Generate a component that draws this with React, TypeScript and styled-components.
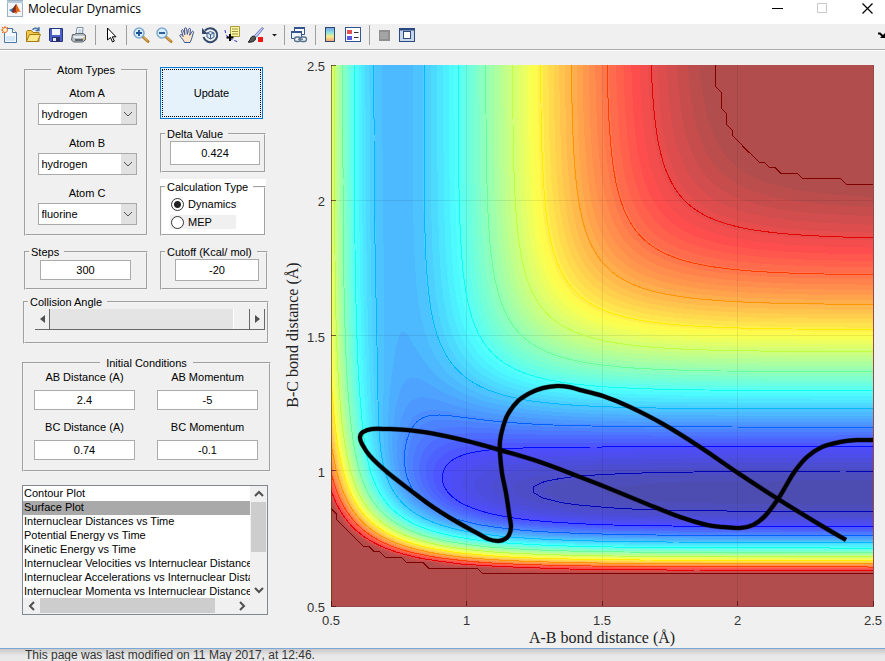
import React from "react";
import styled, { createGlobalStyle } from "styled-components";

/* ---------- potential energy surface ---------- */

type Pair = { depth: number; beta: number; r0: number };

const HH: Pair = { depth: 109.449, beta: 1.942, r0: 0.7419 };
const HF: Pair = { depth: 141.196, beta: 2.2187, r0: 0.917 };
const SATO = 0.186;
const CUTOFF = -22.4;
const V_MIN = -141.5;

const STEP = 0.02;
const N = 101;

function coulombExchange(p: Pair, r: number): [number, number] {
  const u = Math.exp(-p.beta * (r - p.r0));
  const singlet = p.depth * (u * u - 2 * u);
  const triplet = ((p.depth / 2) * (1 - SATO) * (u * u + 2 * u)) / (1 + SATO);
  return [(singlet + triplet) / 2, (singlet - triplet) / 2];
}

function leps(ab: number, bc: number): number {
  const [q1, j1] = coulombExchange(HH, ab);
  const [q2, j2] = coulombExchange(HF, bc);
  const [q3, j3] = coulombExchange(HF, ab + bc);
  const mix = (j1 - j2) ** 2 + (j2 - j3) ** 2 + (j3 - j1) ** 2;
  return q1 + q2 + q3 - Math.sqrt(mix / 2);
}

const grid: number[][] = Array.from({ length: N }, (_, j) =>
  Array.from({ length: N }, (_, i) => Math.min(CUTOFF, leps(0.5 + i * STEP, 0.5 + j * STEP)))
);

/* plot frame in drawing units */
const LEFT = 331;
const RIGHT = 873;
const TOP = 65;
const BOTTOM = 606;
const px = (i: number) => LEFT + ((RIGHT - LEFT) * i) / (N - 1);
const py = (j: number) => BOTTOM - ((BOTTOM - TOP) * j) / (N - 1);

/* Marching squares. With `closed` the grid is ringed by low values so every line becomes a loop. */
function contour(level: number, closed: boolean): string {
  const lo = closed ? -1 : 0;
  const hi = closed ? N : N - 1;
  const value = (i: number, j: number) =>
    i < 0 || j < 0 || i >= N || j >= N ? -1e9 : grid[j][i];
  const next = new Map<string, string>();
  const ends = new Set<string>();
  const points = new Map<string, string>();

  const cross = (a: number[], b: number[]): string => {
    const [p, q] = a[0] < b[0] || a[1] < b[1] ? [a, b] : [b, a];
    const key = `${p[0]},${p[1]},${q[0]},${q[1]}`;
    if (!points.has(key)) {
      const vp = value(p[0], p[1]);
      const vq = value(q[0], q[1]);
      const t = (level - vp) / (vq - vp);
      const x = px(p[0] + (q[0] - p[0]) * t);
      const y = py(p[1] + (q[1] - p[1]) * t);
      points.set(key, `${x.toFixed(1)} ${y.toFixed(1)}`);
    }
    return key;
  };

  for (let j = lo; j < hi; j++) {
    for (let i = lo; i < hi; i++) {
      const c = [[i, j], [i + 1, j], [i + 1, j + 1], [i, j + 1]];
      const inside = c.map(([a, b]) => value(a, b) >= level);
      for (let e = 0; e < 4; e++) {
        if (!inside[e] || inside[(e + 1) % 4]) continue;
        let f = (e + 1) % 4;
        while (!(!inside[f] && inside[(f + 1) % 4])) f = (f + 1) % 4;
        const from = cross(c[e], c[(e + 1) % 4]);
        const to = cross(c[f], c[(f + 1) % 4]);
        next.set(from, to);
        ends.add(to);
      }
    }
  }

  const seen = new Set<string>();
  const starts = [...next.keys()];
  const ordered = [...starts.filter((k) => !ends.has(k)), ...starts.filter((k) => ends.has(k))];
  let d = "";
  for (const start of ordered) {
    if (seen.has(start)) continue;
    let key: string | undefined = start;
    d += "M" + points.get(start);
    while (key !== undefined && !seen.has(key)) {
      seen.add(key);
      key = next.get(key);
      if (key !== undefined) d += "L" + points.get(key);
    }
  }
  return d;
}

/* rainbow map, optionally washed towards white */
function jet(level: number, alpha: number): string {
  const t = Math.min(1, Math.max(0, (level - V_MIN) / (CUTOFF - V_MIN)));
  const v = 0.0625 + t * 3.875;
  const clamp = (n: number) => Math.min(1, Math.max(0, n));
  const rgb = [
    clamp(Math.min(v - 1.5, 4.5 - v)),
    clamp(Math.min(v - 0.5, 3.5 - v)),
    clamp(Math.min(v + 0.5, 2.5 - v)),
  ];
  return `rgb(${rgb.map((n) => Math.round(255 * (n * alpha + 1 - alpha))).join(",")})`;
}

const BAND_COUNT = 64;
const bands = Array.from({ length: BAND_COUNT - 1 }, (_, k) => {
  const width = (CUTOFF - V_MIN) / BAND_COUNT;
  const level = V_MIN + width * (k + 1);
  return { d: contour(level, true), fill: jet(V_MIN + (width * (k + 1) * BAND_COUNT) / (BAND_COUNT - 1), 0.7) };
});

const lines = Array.from({ length: 12 }, (_, k) => {
  const level = k === 11 ? CUTOFF - 0.0001 : -137.2 + 10.43 * k;
  return { d: contour(level, false), stroke: k === 11 ? "rgb(128,0,0)" : jet(level, 1) };
});

const track: number[][] = [
  [846, 540], [822, 526], [778, 499], [738, 473], [700, 447], [663, 424], [630, 407], [603, 396],
  [580, 390], [569, 387], [557, 386], [543, 388], [530, 393], [518, 401], [508, 414], [503, 427],
  [500, 441], [500, 453], [502, 473], [506, 493], [509, 513], [511, 527], [509, 535], [505, 539],
  [498, 541], [488, 539], [477, 533], [457, 522], [433, 507], [410, 490], [387, 472], [370, 456],
  [362, 444], [360, 437], [363, 432], [372, 429], [386, 429], [407, 430], [430, 433], [463, 440],
  [500, 450], [540, 462], [580, 477], [613, 490], [647, 504], [680, 517], [707, 525], [723, 527],
  [740, 528], [753, 525], [765, 516], [778, 499], [787, 484], [795, 471], [807, 457], [822, 447],
  [840, 442], [857, 440], [873, 440],
];

function smooth(pts: number[][]): string {
  let d = `M${pts[0].join(" ")}`;
  for (let i = 0; i < pts.length - 1; i++) {
    const [a, b, c, e] = [pts[Math.max(0, i - 1)], pts[i], pts[i + 1], pts[Math.min(pts.length - 1, i + 2)]];
    const h = (p: number, q: number, r: number) => (p + (r - q) / 6).toFixed(1);
    d += `C${h(b[0], a[0], c[0])} ${h(b[1], a[1], c[1])} ${h(c[0], e[0], b[0])} ${h(c[1], e[1], b[1])} ${c.join(" ")}`;
  }
  return d;
}

const trackPath = smooth(track);

/* ---------- styles ---------- */

const GlobalStyle = createGlobalStyle`
  body { margin: 0; background: #e9e9e9; }
  *, *::before, *::after { box-sizing: border-box; }
`;

const Page = styled.div`
  min-height: 100vh;
  display: flex;
  flex-direction: column;
  font-family: "Liberation Sans", Arial, sans-serif;
  font-size: 11px;
  line-height: 14px;
  color: #000;
`;

const Window = styled.main`
  flex: none;
  background: #f0f0f0;
  border-bottom: 1px solid #7ba7d7;
`;

const TitleBar = styled.header`
  display: flex;
  align-items: flex-start;
  height: 24px;
  background: #fff;
  padding-left: 7px;
`;

const Title = styled.h1`
  flex: 1;
  margin: 0;
  padding-left: 5px;
  font: 400 12px/18px "Open Sans", "Noto Sans", sans-serif;
`;

const CaptionButton = styled.button`
  width: 45px;
  height: 17px;
  padding: 0 0 0 9px;
  border: 0;
  background: none;
  display: grid;
  place-items: center;
`;

const Toolbar = styled.div`
  display: flex;
  align-items: center;
  height: 27px;
  border-bottom: 2px groove #fff;
  padding-bottom: 3px;
`;

const Tool = styled.button<{ $width?: number }>`
  flex: none;
  width: ${(p) => p.$width ?? 23}px;
  height: 22px;
  padding: 0 0 0 1px;
  border: 0;
  background: none;
  display: flex;
  align-items: center;
`;

const Divider = styled.span`
  flex: none;
  width: 1px;
  height: 20px;
  margin: 0 4px 0 3px;
  background: #a0a0a0;
`;

const Spacer = styled.span`
  flex: 1;
`;

const Figure = styled.div`
  display: flex;
  align-items: flex-start;
`;

const Controls = styled.form`
  flex: none;
  width: 280px;
  padding: 12px 9px 0 22px;
  display: flex;
  flex-direction: column;
`;

const TwoColumns = styled.div<{ $after: number }>`
  display: grid;
  grid-template-columns: 124px 108px;
  column-gap: 12px;
  margin: 0 3px ${(p) => p.$after}px 2px;
`;

const Stack = styled.div`
  display: flex;
  flex-direction: column;
  align-items: flex-start;
  padding-top: 4px;
`;

const Group = styled.fieldset<{ $center?: boolean }>`
  min-width: 0;
  width: 100%;
  margin: 0;
  border: 2px groove #f4f4f4;
  padding: 0;
  & > legend {
    padding: 0 ${(p) => (p.$center ? 6 : 5)}px 0 ${(p) => (p.$center ? 6 : 2)}px;
    margin-left: ${(p) => (p.$center ? "auto" : "3px")};
    margin-right: ${(p) => (p.$center ? "auto" : "0")};
    white-space: nowrap;
  }
`;

const Body = styled.div<{ $pad: string }>`
  padding: ${(p) => p.$pad};
`;

const DeltaSlot = styled.div`
  width: 106px;
  margin: 8px 0 6px;
`;

const WhiteSlot = styled.div`
  width: 106px;
  padding-top: 1px;
  background: #fff;
`;

const Update = styled.button`
  width: 103px;
  height: 52px;
  border: 1px solid #0078d7;
  outline: 1px dotted #000;
  outline-offset: -3px;
  background: #e5f1fb;
  font: inherit;
`;

const Labelled = styled.label<{ $gap?: number }>`
  display: grid;
  row-gap: ${(p) => p.$gap ?? 3}px;
  justify-items: center;
  text-align: center;
`;

const Atoms = styled.div`
  display: grid;
  row-gap: 11px;
  justify-content: center;
`;

const DropFrame = styled.span`
  display: grid;
  width: 99px;
  height: 22px;
  & > * {
    grid-area: 1 / 1;
  }
`;

const Drop = styled.select`
  appearance: none;
  width: 100%;
  border: 1px solid #a9a9a9;
  border-radius: 0;
  background: #fff;
  padding: 0 3px;
  font: inherit;
  color: #000;
`;

const DropArrow = styled.span`
  justify-self: end;
  width: 15px;
  margin: 1px;
  background: #e1e1e1;
  display: grid;
  place-items: center;
  pointer-events: none;
`;

const Value = styled.input<{ $width?: number; $height?: number }>`
  display: block;
  width: ${(p) => (p.$width ? `${p.$width}px` : "100%")};
  height: ${(p) => p.$height ?? 20}px;
  border: 1px solid #ababab;
  padding: 0;
  background: #fff;
  font: inherit;
  color: #000;
  text-align: center;
`;

const Choice = styled.label<{ $shaded?: boolean }>`
  display: flex;
  align-items: center;
  gap: 4px;
  width: 66px;
  height: 14px;
  margin-bottom: 4px;
  background: ${(p) => (p.$shaded ? "#f0f0f0" : "#fff")};
`;

const Radio = styled.input`
  appearance: none;
  flex: none;
  width: 13px;
  height: 13px;
  margin: 0 0 0 1px;
  border: 1px solid #333;
  border-radius: 50%;
  background: #fff;
  &:checked {
    background: radial-gradient(circle, #222 0 3px, #fff 4px);
  }
`;

const Wide = styled.div`
  margin: 0 2px 12px 1px;
`;

const Slider = styled.div`
  display: flex;
  width: 230px;
  height: 21px;
  border-bottom: 1px solid #696969;
`;

const SliderEnd = styled.button`
  flex: none;
  width: 15px;
  padding: 0;
  border: 0;
  border-right: 1px solid #696969;
  background: #f0f0f0;
  display: grid;
  place-items: center;
`;

const Range = styled.input`
  appearance: none;
  flex: 1;
  min-width: 0;
  height: 20px;
  margin: 0;
  background: #e4e4e4;
  &::-webkit-slider-thumb {
    appearance: none;
    width: 17px;
    height: 20px;
    background: #f0f0f0;
    border-left: 1px solid #fff;
    border-right: 1px solid #696969;
  }
`;

const Conditions = styled.div`
  display: grid;
  grid-template-columns: 101px 101px;
  column-gap: 22px;
  row-gap: 10px;
`;

const ListBox = styled.div`
  display: grid;
  grid-template-columns: minmax(0, 1fr) 17px;
  grid-template-rows: 112px 16px;
  width: 246px;
  margin-top: 13px;
  border: 1px solid #828790;
  background: #fff;
`;

const List = styled.select`
  overflow: hidden;
  scrollbar-width: none;
  border: 0;
  outline: 0;
  padding: 1px 0 0;
  background: #fff;
  font: inherit;
  color: #000;
`;

const Item = styled.option`
  height: 14px;
  min-height: 14px;
  padding: 0 1px;
  line-height: 14px;
  color: #000;
  &:checked {
    color: #000;
    background: #a9a9a9 linear-gradient(#a9a9a9, #a9a9a9);
  }
`;

const ScrollBar = styled.div<{ $across?: boolean }>`
  display: flex;
  flex-direction: ${(p) => (p.$across ? "row" : "column")};
  background: #f0f0f0;
`;

const ScrollEnd = styled.button`
  flex: none;
  width: 17px;
  height: 16px;
  padding: 0;
  border: 0;
  background: none;
  display: grid;
  place-items: center;
`;

const Thumb = styled.span<{ $across?: boolean }>`
  flex: none;
  width: ${(p) => (p.$across ? "175px" : "15px")};
  height: ${(p) => (p.$across ? "15px" : "50px")};
  margin: ${(p) => (p.$across ? "0 auto 0 0" : "0 1px auto")};
  background: #cdcdcd;
`;

const Corner = styled.span`
  background: #f0f0f0;
`;

const Plot = styled.svg`
  flex: 1;
  min-width: 0;
  display: block;
`;

const Footer = styled.footer`
  padding: 0 25px;
  font-size: 12px;
  line-height: 12px;
  color: #333;
  background: linear-gradient(#c9c9c9, #e9e9e9 7px);
  white-space: nowrap;
`;

/* ---------- icons ---------- */

function Icon({ children, size = 18 }: { children: React.ReactNode; size?: number }) {
  return (
    <svg width={size} height="18" viewBox={`0 0 ${size} 18`} fill="none" aria-hidden="true">
      {children}
    </svg>
  );
}

const Logo = () => (
  <svg width="16" height="17" viewBox="0 0 16 17" aria-hidden="true">
    <rect x="0.5" y="0.5" width="15" height="16" fill="#f2f6fa" stroke="#9fb2c4" />
    <path d="M0 1h16v2H0z" fill="#b7c9da" />
    <path d="M2 10l4-2 3 3-3 2z" fill="#3c7fb5" />
    <path d="M6 8l3-4 1 1-1 6-2 2-2-1z" fill="#7a2a1c" />
    <path d="M9 4c2 2 3 6 5 8-2-1-3-1-5 2l-2-2c2-1 2-5 2-8z" fill="#e2661a" />
    <path d="M9 5v7l-2 0z" fill="#a83214" />
  </svg>
);

const NewIcon = () => (
  <Icon>
    <path d="M3.500 2.500h8l4 4v10h-12z" fill="#f4faff" stroke="#4a77a8" />
    <path d="M5 10h9v5H5z" fill="#d3e7f7" />
    <path d="M11.500 2.500v4h4" fill="#fff" stroke="#4a77a8" />
    <circle cx="4" cy="4" r="2.500" fill="#fff4d0" stroke="#e2722c" />
    <path d="M4 0v2M0 4h2M1 1l1 1M7 1L6 2M1 7l1-1" stroke="#e2722c" />
  </Icon>
);

const OpenIcon = () => (
  <Icon>
    <path d="M2.500 15.500v-10l1-1h4l1.500 2h6v9z" fill="#f3c64c" stroke="#a77b14" />
    <path d="M2.500 15.500l3-7h11l-3 7z" fill="#fde98b" stroke="#a77b14" />
    <path d="M8.500 4c1-2 4-2.500 6-.5M15 1v3.500h-3.500" stroke="#3b6ea5" strokeWidth="1.300" />
  </Icon>
);

const SaveIcon = () => (
  <Icon>
    <path d="M2.500 2.500h13v13h-12l-1-1z" fill="#4a5fc8" stroke="#27347f" />
    <rect x="5" y="3" width="8" height="6" fill="#f3f6ff" />
    <rect x="5" y="11" width="8" height="5" fill="#27306b" />
    <rect x="6" y="12" width="3" height="3" fill="#e7eaf6" />
  </Icon>
);

const PrintIcon = () => (
  <Icon>
    <path d="M6 8L7 1.500h6L12.500 8" fill="#fff" stroke="#7d8fa3" />
    <path d="M8 4h3.500M8 6h3.500" stroke="#8cb0d8" />
    <path d="M2.500 8.500h2l1.500-1h7l2.500 1.500v5l-3 2h-9l-2-2z" fill="#b6bcc4" stroke="#5d646d" />
    <path d="M3 10h12l-2 2H4z" fill="#e9ecef" />
    <path d="M5 14h8" stroke="#454b52" strokeWidth="1.500" />
    <circle cx="14" cy="12.500" r="1" fill="#e0c84a" />
  </Icon>
);

const PointerIcon = () => (
  <Icon>
    <path d="M6.500 2v12l3-2.500 2 4.500 1.800-.9-2-4.300h3.700z" fill="#fff" stroke="#000" />
  </Icon>
);

const ZoomIcon = ({ plus }: { plus?: boolean }) => (
  <Icon>
    <path d="M11 11l5 4.500" stroke="#b6802a" strokeWidth="3" strokeLinecap="round" />
    <path d="M11.500 11l4 3.800" stroke="#f0c778" />
    <circle cx="7" cy="7" r="5" fill="#d6eefc" stroke="#7fa9cf" strokeWidth="1.500" />
    <path d={plus ? "M4 7h6M7 4v6" : "M4 7h6"} stroke="#1e4f94" strokeWidth="1.800" />
  </Icon>
);

const HandIcon = () => (
  <Icon>
    <path
      d="M6.500 16.500c-1-2.500-3-4.500-4.500-6.500-.8-1.300 1-2 2-.8l1.200 1.300L3.500 5c-.3-1.500 1.500-1.800 2-.3l1.300 4L6.500 3c0-1.600 2-1.600 2.200 0l.6 5.300 1.200-5c.4-1.500 2.200-1 2 .5l-.8 5.500 2-3.500c.8-1.300 2.300-.5 1.700 1-1 2.700-1.400 6-3.400 9.700z"
      fill="#fce6c9"
      stroke="#37559b"
    />
  </Icon>
);

const RotateIcon = () => (
  <Icon>
    <path d="M4 4.500A7 7 0 1 1 2.500 11" stroke="#33486b" strokeWidth="2" />
    <path d="M1 2v6h6z" fill="#33486b" />
    <path d="M6 7l3.500-1.500L13 7v4l-3.500 2L6 11zM6 7l3.500 1.500L13 7M9.500 8.500V13" fill="#dbe8f5" stroke="#41608c" />
  </Icon>
);

const DataTipIcon = () => (
  <Icon>
    <path d="M6.500.5h9v10h-9z" fill="#fbf6a4" stroke="#a79b3e" />
    <path d="M8 3h6M8 5.500h6M8 8h6" stroke="#9b9140" />
    <path d="M1 4c.5 4 2 7 5 8.500s6 3 9 3.500" stroke="#3333c8" strokeDasharray="3 2" />
    <path d="M6 8v7M2.500 11.500h7" stroke="#000" strokeWidth="2" />
  </Icon>
);

const BrushIcon = () => (
  <Icon>
    <path d="M7.500 9.500L15 1.500l1.500 1L9.500 11z" fill="#c3cdfa" stroke="#6d79b8" />
    <path d="M1 16c2-.5 2-4 4-5.500 1.500-1 4 0 3.500 2.500C8 15.500 4 16.800 1 16z" fill="#555" stroke="#222" />
    <rect x="11" y="11" width="5" height="5" fill="#f01414" />
  </Icon>
);

const CaretIcon = () => (
  <Icon size={10}>
    <path d="M2 8h5L4.500 10.500z" fill="#222" />
  </Icon>
);

const LinkIcon = () => (
  <Icon>
    <path d="M4.500 1.500h10v7h-10z" fill="#fff" stroke="#33548c" />
    <path d="M4 1h11v2H4z" fill="#33548c" />
    <path d="M1.500 5.500h10v7h-10z" fill="#eef4fb" stroke="#33548c" />
    <path d="M1 5h11v2H1z" fill="#33548c" />
    <rect x="4.500" y="11" width="6" height="4.500" rx="2.200" fill="#e8eff5" stroke="#58718c" strokeWidth="1.300" />
    <rect x="10" y="11" width="6.500" height="4.500" rx="2.200" fill="#e8eff5" stroke="#58718c" strokeWidth="1.300" />
    <path d="M8 13.200h5" stroke="#58718c" strokeWidth="1.300" />
  </Icon>
);

const ColorBarIcon = () => (
  <Icon>
    <defs>
      <linearGradient id="bar" x1="0" y1="0" x2="0" y2="1">
        <stop offset="0" stopColor="#6fa0e8" />
        <stop offset="0.350" stopColor="#8ee0e0" />
        <stop offset="0.650" stopColor="#f5ec8a" />
        <stop offset="1" stopColor="#f0a07a" />
      </linearGradient>
    </defs>
    <rect x="4.500" y="1.500" width="9" height="14" fill="url(#bar)" stroke="#33466e" />
  </Icon>
);

const LegendIcon = () => (
  <Icon>
    <rect x="1.500" y="1.500" width="15" height="14" fill="#fff" stroke="#33548c" />
    <rect x="3" y="4" width="5" height="4" fill="#e05050" />
    <rect x="3" y="10" width="5" height="4" fill="#5a5ae0" />
    <path d="M10 6.500h4.500M10 11.500h4.500" stroke="#333" />
  </Icon>
);

const HideIcon = () => (
  <Icon>
    <rect x="4" y="4" width="11" height="11" fill="#8f8f8f" />
    <rect x="5" y="6" width="8" height="7" fill="#a4a4a4" />
  </Icon>
);

const DockIcon = () => (
  <Icon>
    <rect x="1.500" y="2.500" width="15" height="13" fill="#c7d6ea" stroke="#2c4a82" />
    <path d="M1 2h16v2.500H1z" fill="#2c4a82" />
    <rect x="5.500" y="5.500" width="7" height="7" fill="#fff" stroke="#2c4a82" />
  </Icon>
);

const Triangle = ({ left }: { left?: boolean }) => (
  <svg width="5" height="8" viewBox="0 0 5 8" aria-hidden="true">
    <path d={left ? "M5 0v8L0 4z" : "M0 0v8l5-4z"} fill="#505050" />
  </svg>
);

const chevrons = {
  up: "M1 7l4-4 4 4",
  down: "M1 3l4 4 4-4",
  left: "M7 1L3 5l4 4",
  right: "M3 1l4 4-4 4",
};

const Chevron = ({ to, weight = 2 }: { to: keyof typeof chevrons; weight?: number }) => (
  <svg width="10" height="10" viewBox="0 0 10 10" fill="none" stroke="#505050" strokeWidth={weight} aria-hidden="true">
    <path d={chevrons[to]} />
  </svg>
);

/* ---------- page ---------- */

function AtomSelect({ name, value }: { name: string; value: string }) {
  return (
    <Labelled>
      {name}
      <DropFrame>
        <Drop defaultValue={value}>
          <option>hydrogen</option>
          <option>fluorine</option>
        </Drop>
        <DropArrow>
          <Chevron to="down" weight={1} />
        </DropArrow>
      </DropFrame>
    </Labelled>
  );
}

const conditions = [
  ["AB Distance (A)", "2.4"],
  ["AB Momentum", "-5"],
  ["BC Distance (A)", "0.74"],
  ["BC Momentum", "-0.1"],
];

const plots = [
  "Contour Plot",
  "Surface Plot",
  "Internuclear Distances vs Time",
  "Potential Energy vs Time",
  "Kinetic Energy vs Time",
  "Internuclear Velocities vs Internuclear Distance",
  "Internuclear Accelerations vs Internuclear Distance",
  "Internuclear Momenta vs Internuclear Distance",
];

const ticks = [0.5, 1, 1.5, 2, 2.5];

function SurfacePlot() {
  const sans = '"Liberation Sans", Arial, sans-serif';
  const serif = '"Liberation Serif", "Times New Roman", serif';
  return (
    <Plot viewBox="280 51 605 597" role="img" aria-label="Potential energy surface with trajectory">
      <g shapeRendering="crispEdges">
        <rect x={LEFT} y={TOP} width={RIGHT - LEFT} height={BOTTOM - TOP} fill={jet(V_MIN, 0.7)} />
        {bands.map((b, k) => (
          <path key={k} d={b.d} fill={b.fill} fillRule="evenodd" />
        ))}
        {ticks.slice(1, 4).map((t) => (
          <path
            key={t}
            d={`M${px((t - 0.5) / STEP)} ${TOP}V${BOTTOM}M${LEFT} ${py((t - 0.5) / STEP)}H${RIGHT}`}
            stroke="#000"
            strokeOpacity="0.08"
          />
        ))}
        {lines.map((l, k) => (
          <path key={k} d={l.d} fill="none" stroke={l.stroke} />
        ))}
        <path d={`M${LEFT} ${TOP}V${BOTTOM}`} stroke="#4a3a00" strokeOpacity="0.6" />
        <path d={`M${LEFT} ${BOTTOM}H${RIGHT}V${TOP}`} fill="none" stroke="#700000" strokeOpacity="0.7" />
        {ticks.map((t) => (
          <path
            key={t}
            d={`M${px((t - 0.5) / STEP)} ${BOTTOM}v-5M${LEFT} ${py((t - 0.5) / STEP)}h5`}
            stroke="#300"
            strokeOpacity="0.6"
          />
        ))}
      </g>
      <path d={trackPath} fill="none" stroke="#000" strokeOpacity="0.4" strokeWidth="5" />
      <path d={trackPath} fill="none" stroke="#000" strokeWidth="4" />
      <g fontFamily={sans} fontSize="13" fill="#333">
        {ticks.map((t) => (
          <text key={t} x={px((t - 0.5) / STEP)} y="625" textAnchor="middle">{t}</text>
        ))}
        {ticks.map((t) => (
          <text key={t} x="325" y={py((t - 0.5) / STEP) + 6} textAnchor="end">{t}</text>
        ))}
      </g>
      <g fontFamily={serif} fontSize="16" fill="#222" textAnchor="middle">
        <text x="602" y="643">A-B bond distance (Å)</text>
        <text transform="translate(298 335) rotate(-90)">B-C bond distance (Å)</text>
      </g>
    </Plot>
  );
}

export default function App() {
  return (
    <Page>
      <GlobalStyle />
      <Window>
        <TitleBar>
          <Logo />
          <Title>Molecular Dynamics</Title>
          <CaptionButton aria-label="Minimize">
            <svg width="11" height="11" viewBox="0 0 11 11"><path d="M0 5.500h11" stroke="#000" /></svg>
          </CaptionButton>
          <CaptionButton aria-label="Maximize" disabled>
            <svg width="11" height="11" viewBox="0 0 11 11"><path d="M.5.5h9v9h-9z" fill="none" stroke="#c8c8c8" /></svg>
          </CaptionButton>
          <CaptionButton aria-label="Close">
            <svg width="11" height="11" viewBox="0 0 11 11"><path d="M.5.5l10 10M10.500.5l-10 10" stroke="#000" strokeWidth="1.200" /></svg>
          </CaptionButton>
        </TitleBar>
        <Toolbar role="toolbar" aria-label="Figure tools">
          <Tool aria-label="New"><NewIcon /></Tool>
          <Tool aria-label="Open"><OpenIcon /></Tool>
          <Tool aria-label="Save"><SaveIcon /></Tool>
          <Tool aria-label="Print"><PrintIcon /></Tool>
          <Divider />
          <Tool aria-label="Pointer"><PointerIcon /></Tool>
          <Divider />
          <Tool aria-label="Zoom in"><ZoomIcon plus /></Tool>
          <Tool aria-label="Zoom out"><ZoomIcon /></Tool>
          <Tool aria-label="Pan"><HandIcon /></Tool>
          <Tool aria-label="Rotate"><RotateIcon /></Tool>
          <Tool aria-label="Data cursor"><DataTipIcon /></Tool>
          <Tool aria-label="Brush"><BrushIcon /></Tool>
          <Tool aria-label="Brush colours" $width={12}><CaretIcon /></Tool>
          <Divider />
          <Tool aria-label="Link plot"><LinkIcon /></Tool>
          <Divider />
          <Tool aria-label="Colour bar"><ColorBarIcon /></Tool>
          <Tool aria-label="Legend"><LegendIcon /></Tool>
          <Divider />
          <Tool aria-label="Hide plot tools"><HideIcon /></Tool>
          <Tool aria-label="Show plot tools"><DockIcon /></Tool>
          <Spacer />
          <Tool aria-label="Dock figure" $width={8}>
            <svg width="7" height="8" viewBox="0 0 7 8" aria-hidden="true">
              <path d="M0 2.500h2l3 3" fill="none" stroke="#000" strokeWidth="2" />
              <path d="M7 2v5H2z" fill="#000" />
            </svg>
          </Tool>
        </Toolbar>
        <Figure>
          <Controls onSubmit={(e) => e.preventDefault()}>
            <TwoColumns $after={9}>
              <Group $center>
                <legend>Atom Types</legend>
                <Body $pad="9px 0 9px 2px">
                  <Atoms>
                    <AtomSelect name="Atom A" value="hydrogen" />
                    <AtomSelect name="Atom B" value="hydrogen" />
                    <AtomSelect name="Atom C" value="fluorine" />
                  </Atoms>
                </Body>
              </Group>
              <Stack>
                <Update>Update</Update>
                <DeltaSlot>
                  <Group>
                    <legend>Delta Value</legend>
                    <Body $pad="0 4px 6px 8px">
                      <Value aria-label="Delta Value" defaultValue="0.424" $width={90} $height={24} />
                    </Body>
                  </Group>
                </DeltaSlot>
                <WhiteSlot>
                  <Group>
                    <legend>Calculation Type</legend>
                    <Body $pad="3px 0 1px 8px">
                      <Choice><Radio type="radio" name="calc" defaultChecked />Dynamics</Choice>
                      <Choice $shaded><Radio type="radio" name="calc" />MEP</Choice>
                    </Body>
                  </Group>
                </WhiteSlot>
              </Stack>
            </TwoColumns>
            <TwoColumns $after={5}>
              <Group>
                <legend>Steps</legend>
                <Body $pad="1px 0 8px 14px">
                  <Value aria-label="Steps" defaultValue="300" $width={91} />
                </Body>
              </Group>
              <Group>
                <legend>Cutoff (Kcal/ mol)</legend>
                <Body $pad="0 0 7px 13px">
                  <Value aria-label="Cutoff (Kcal/ mol)" defaultValue="-20" $width={84} $height={22} />
                </Body>
              </Group>
            </TwoColumns>
            <Wide>
              <Group>
                <legend>Collision Angle</legend>
                <Body $pad="0 0 12px 10px">
                  <Slider>
                    <SliderEnd type="button" aria-label="Decrease angle"><Triangle left /></SliderEnd>
                    <Range type="range" aria-label="Collision Angle" min={0} max={180} defaultValue={180} />
                    <SliderEnd type="button" aria-label="Increase angle"><Triangle /></SliderEnd>
                  </Slider>
                </Body>
              </Group>
            </Wide>
            <Group $center>
              <legend>Initial Conditions</legend>
              <Body $pad="0 0 10px 10px">
                <Conditions>
                  {conditions.map(([name, value]) => (
                    <Labelled key={name} $gap={6}>
                      {name}
                      <Value defaultValue={value} />
                    </Labelled>
                  ))}
                </Conditions>
              </Body>
            </Group>
            <ListBox>
              <List size={8} defaultValue="Surface Plot" aria-label="Plot type">
                {plots.map((p) => (
                  <Item key={p}>{p}</Item>
                ))}
              </List>
              <ScrollBar>
                <ScrollEnd type="button" aria-label="Scroll up"><Chevron to="up" /></ScrollEnd>
                <Thumb />
                <ScrollEnd type="button" aria-label="Scroll down"><Chevron to="down" /></ScrollEnd>
              </ScrollBar>
              <ScrollBar $across>
                <ScrollEnd type="button" aria-label="Scroll left"><Chevron to="left" /></ScrollEnd>
                <Thumb $across />
                <ScrollEnd type="button" aria-label="Scroll right"><Chevron to="right" /></ScrollEnd>
              </ScrollBar>
              <Corner />
            </ListBox>
          </Controls>
          <SurfacePlot />
        </Figure>
      </Window>
      <Footer>This page was last modified on 11 May 2017, at 12:46.</Footer>
    </Page>
  );
}
